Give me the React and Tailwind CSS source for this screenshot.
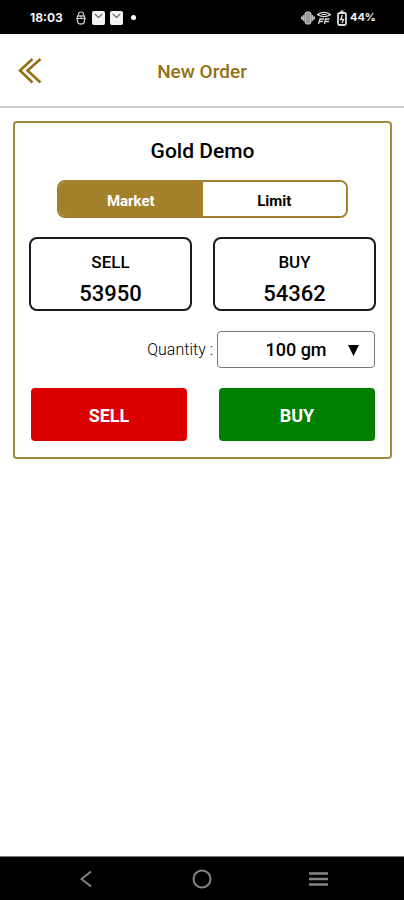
import { useState } from "react";

const StatusBar = () => {
  return (
    <div className="flex h-[34px] items-center bg-black pl-[30px] pr-7 pt-px font-['Inter',sans-serif] text-xs font-bold text-gray-100">
      <span>18:03</span>
      <svg className="ml-3 h-4 w-3" viewBox="0 0 12 16" fill="none" stroke="#c4c4c4">
        <path d="M3.5 5.500V4.200a2.500 2.200 0 0 1 5 0v1.300" strokeWidth="1.2" />
        <path d="M2.500 6h7v5a3.500 3 0 0 1-7 0z" strokeWidth="1.400" />
        <path d="M1 8.500h10M6 6v3" strokeWidth="1.200" />
      </svg>
      {[0, 1].map((item) => (
        <svg key={item} className="ml-[5px] h-3.5 w-[13px]" viewBox="0 0 14 14" preserveAspectRatio="none">
          <rect width="14" height="14" rx="2" fill="#f3f3f3" />
          <path d="M3 3l4 3.5L11 3" fill="none" stroke="#666" strokeWidth="1.1" />
        </svg>
      ))}
      <span className="ml-2 size-[5px] rounded-full bg-white" />

      <svg className="ml-auto h-3.5 w-3.5" viewBox="0 0 14 14">
        <rect x="4" y="1" width="6" height="12" rx="2" fill="#9a9a9a" stroke="#d0d0d0" />
        <path d="M2.7 4v6M11.3 4v6M.9 5.5v3M13.1 5.5v3" stroke="#bbb" strokeWidth="1.8" />
      </svg>
      <svg className="ml-0.5 h-3.5 w-3.5" viewBox="0 0 14 14" fill="none" stroke="#d8d8d8">
        <path d="M.6 3.6Q7-.8 13.4 3.6Q7 7.6.6 3.6z" strokeWidth="1.3" />
        <path d="M4.5 3.5h5" />
        <path d="M1.5 13l1.500-5H7M2 10.500h4M7.500 13l1-5H12.500M8 10.500h4" strokeWidth="1.300" />
      </svg>
      <svg className="ml-1.5 h-4 w-2.5" viewBox="0 0 10 16" fill="none" stroke="#dedede">
        <path d="M3.5 1.5h3" strokeWidth="2" />
        <rect x="1" y="3" width="8" height="12" rx="1.5" strokeWidth="1.8" />
        <path d="M5.5 5L3.5 9.5h3L5 13" strokeWidth="1.4" />
      </svg>
      <span className="ml-[3px] text-[11px]">44%</span>
    </div>
  );
};

const Header = () => {
  return (
    <header className="relative flex h-[74px] items-center justify-center border-b-2 border-[#cccccc] pt-1">
      <button type="button" aria-label="Back" className="absolute left-[18px] top-6 cursor-pointer">
        <svg
          className="h-[26px] w-6"
          viewBox="0 0 24 26"
          fill="none"
          stroke="#947012"
          strokeWidth="2.6"
        >
          <path d="M14.500 1L2 12.500l12.500 12M22.500 1L9.500 12.500l13 12" />
        </svg>
      </button>
      <h1 className="text-[19px] font-medium text-[#947012]">New Order</h1>
    </header>
  );
};

const PriceBox = ({ label, price }) => {
  return (
    <div className="flex h-[74px] flex-col items-center justify-center rounded-lg border-2 border-[#1a1a1a] pt-2 text-black">
      <span className="text-[17px] font-medium leading-8">{label}</span>
      <span className="text-[22px] font-medium leading-8">{price}</span>
    </div>
  );
};

const OrderCard = () => {
  const [orderType, setOrderType] = useState("Market");

  return (
    <div className="ml-[13px] mr-3 mt-[13px] rounded-sm border-2 border-[#a58a3c] px-3.5 pb-4 pt-3.5">
      <h2 className="text-center text-[21px] font-medium leading-7 text-black">
        Gold Demo
      </h2>

      <div className="mx-7 mt-[15px] grid h-[38px] grid-cols-2 overflow-hidden rounded-lg border-2 border-[#a3812b]">
        {["Market", "Limit"].map((type) => (
          <button
            key={type}
            type="button"
            onClick={() => setOrderType(type)}
            className={
              orderType === type
                ? "cursor-pointer bg-[#a3812b] pt-1 text-[15px] font-bold text-white"
                : "cursor-pointer bg-white pt-1 text-[15px] font-bold text-black"
            }
          >
            {type}
          </button>
        ))}
      </div>

      <div className="mt-[19px] grid grid-cols-2 gap-[21px]">
        <PriceBox label="SELL" price="53950" />
        <PriceBox label="BUY" price="54362" />
      </div>

      <div className="mt-5 flex items-center justify-end gap-1 pr-px">
        <label htmlFor="quantity" className="text-base font-light text-black">
          Quantity :
        </label>
        <div className="relative w-[158px]">
          <select
            id="quantity"
            defaultValue="100"
            className="block h-[37px] w-full cursor-pointer appearance-none rounded-sm border border-[#777777] bg-white text-center text-lg font-medium text-black [text-align-last:center]"
          >
            <option value="100">100 gm</option>
          </select>
          <svg
            className="pointer-events-none absolute right-4 top-3.5 h-[11px] w-[11px]"
            viewBox="0 0 11 11"
          >
            <path d="M0 0h11L5.5 11z" fill="#000" />
          </svg>
        </div>
      </div>

      <div className="mt-5 grid grid-cols-2 gap-8 pl-0.5 pr-px text-lg font-bold text-white">
        <button type="button" className="h-[53px] cursor-pointer rounded-sm bg-[#dd0000] pt-0.5">
          SELL
        </button>
        <button type="button" className="h-[53px] cursor-pointer rounded-sm bg-[#008000] pt-0.5">
          BUY
        </button>
      </div>
    </div>
  );
};

const BottomNav = () => {
  return (
    <nav className="grid h-11 grid-cols-[1fr_auto_1fr] items-center border-t border-[#777777] bg-black">
      <button type="button" aria-label="Go back" className="mr-[100px] cursor-pointer justify-self-end">
        <svg className="h-[18px] w-3" viewBox="0 0 12 18" fill="none" stroke="#858585" strokeWidth="2">
          <path d="M11 1.500L1.500 9l9.500 7.500" />
        </svg>
      </button>
      <button type="button" aria-label="Home" className="cursor-pointer">
        <svg className="size-5" viewBox="0 0 20 20" fill="none" stroke="#858585" strokeWidth="2">
          <circle cx="10" cy="10" r="8.500" />
        </svg>
      </button>
      <button type="button" aria-label="Recent apps" className="ml-[97px] cursor-pointer justify-self-start">
        <svg className="h-[18px] w-[19px]" viewBox="0 0 19 18" stroke="#858585" strokeWidth="2.500">
          <path d="M0 3.500h19M0 9h19M0 14.500h19" />
        </svg>
      </button>
    </nav>
  );
};

const App = () => {
  return (
    <div className="flex min-h-screen flex-col bg-white font-['Roboto',sans-serif]">
      <StatusBar />
      <Header />
      <main className="flex-1">
        <OrderCard />
      </main>
      <BottomNav />
    </div>
  );
};

export default App;
